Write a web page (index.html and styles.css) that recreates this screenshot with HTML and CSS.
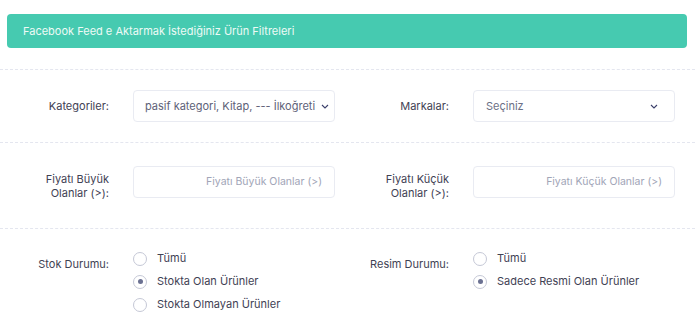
FILE: index.html
```html
<!DOCTYPE html>
<html lang="tr">
<head>
  <meta charset="UTF-8">
  <title>Ürün Filtreleri</title>
  <link rel="stylesheet" href="styles.css">
</head>
<body>
  <div class="alert">Facebook Feed e Aktarmak İstediğiniz Ürün Filtreleri</div>

  <div class="form-row">
    <div class="half">
      <label class="form-label">Kategoriler:</label>
      <div class="select">
        <span class="select-text">pasif kategori, Kitap, --- İlkoğreti</span>
        <svg class="chevron" width="8" height="5" viewBox="0 0 8 5"><path d="M1 1l3 3 3-3" fill="none" stroke="#3b3f6b" stroke-width="1.1"/></svg>
      </div>
    </div>
    <div class="half">
      <label class="form-label">Markalar:</label>
      <div class="select wide-pad">
        <span class="select-text muted">Seçiniz</span>
        <svg class="chevron" width="8" height="5" viewBox="0 0 8 5"><path d="M1 1l3 3 3-3" fill="none" stroke="#3b3f6b" stroke-width="1.1"/></svg>
      </div>
    </div>
  </div>

  <div class="form-row tall">
    <div class="half">
      <label class="form-label two-line">Fiyatı Büyük<br>Olanlar (>):</label>
      <input class="input" type="text" placeholder="Fiyatı Büyük Olanlar (>)">
    </div>
    <div class="half">
      <label class="form-label two-line">Fiyatı Küçük<br>Olanlar (>):</label>
      <input class="input" type="text" placeholder="Fiyatı Küçük Olanlar (>)">
    </div>
  </div>

  <div class="form-row last">
    <div class="half top">
      <label class="form-label radio-label">Stok Durumu:</label>
      <div class="radio-list">
        <label class="radio"><span class="dot"></span>Tümü</label>
        <label class="radio"><span class="dot checked"></span>Stokta Olan Ürünler</label>
        <label class="radio"><span class="dot"></span>Stokta Olmayan Ürünler</label>
      </div>
    </div>
    <div class="half top">
      <label class="form-label radio-label">Resim Durumu:</label>
      <div class="radio-list">
        <label class="radio"><span class="dot"></span>Tümü</label>
        <label class="radio"><span class="dot checked"></span>Sadece Resmi Olan Ürünler</label>
      </div>
    </div>
  </div>
</body>
</html>
```

FILE: styles.css
```css
body {
  margin: 0;
  padding-top: 14px;
  font-family: Inter, "Noto Sans", sans-serif;
  font-size: 11px;
  color: #3f4254;
  background: #ffffff;
}

.alert {
  margin: 0 8px 21px 7px;
  height: 34px;
  line-height: 34px;
  padding: 0 16px;
  background: #46cab0;
  color: #eefaf6;
  border-radius: 4px;
  font-size: 11px;
}

.form-row {
  display: flex;
  padding: 20px 0;
  border-top: 1px dashed #e4e6ef;
}

.form-row.tall {
  padding: 20px 0 28px;
}

.form-row.last {
  padding: 17px 0 10px;
}

.half {
  display: flex;
  width: 340px;
  align-items: center;
}

.half.top {
  align-items: flex-start;
}

.form-label {
  width: 109px;
  margin-right: 24px;
  text-align: right;
  color: #3f4254;
}

.form-label.two-line {
  align-self: flex-start;
  padding-top: 9px;
  line-height: 14px;
}

.form-label.radio-label {
  padding-top: 11px;
}

.select {
  box-sizing: border-box;
  width: 202px;
  height: 32px;
  border: 1px solid #e9ebf2;
  border-radius: 4px;
  display: flex;
  align-items: center;
  padding: 0 5px 0 11px;
}

.select.wide-pad {
  padding: 0 16px 0 12px;
}

.select-text {
  flex: 1;
  white-space: nowrap;
  overflow: hidden;
  color: #5e6278;
}

.select-text.muted {
  color: #6c7086;
}

.chevron {
  flex: none;
}

.input {
  box-sizing: border-box;
  width: 202px;
  height: 32px;
  border: 1px solid #e9ebf2;
  border-radius: 4px;
  padding: 0 12px;
  text-align: right;
  font-family: inherit;
  font-size: 10.5px;
  outline: none;
}

.input::placeholder {
  color: #a1a5b7;
}

.radio-list {
  display: flex;
  flex-direction: column;
}

.radio {
  display: flex;
  align-items: center;
  height: 23px;
  color: #3f4254;
}

.dot {
  box-sizing: border-box;
  width: 14px;
  height: 14px;
  border: 1px solid #c5c8d6;
  border-radius: 50%;
  margin-right: 10px;
  position: relative;
  top: 1px;
}

.dot.checked::after {
  content: "";
  position: absolute;
  left: 3.5px;
  top: 3.5px;
  width: 5px;
  height: 5px;
  border-radius: 50%;
  background: #6b7192;
}
```
